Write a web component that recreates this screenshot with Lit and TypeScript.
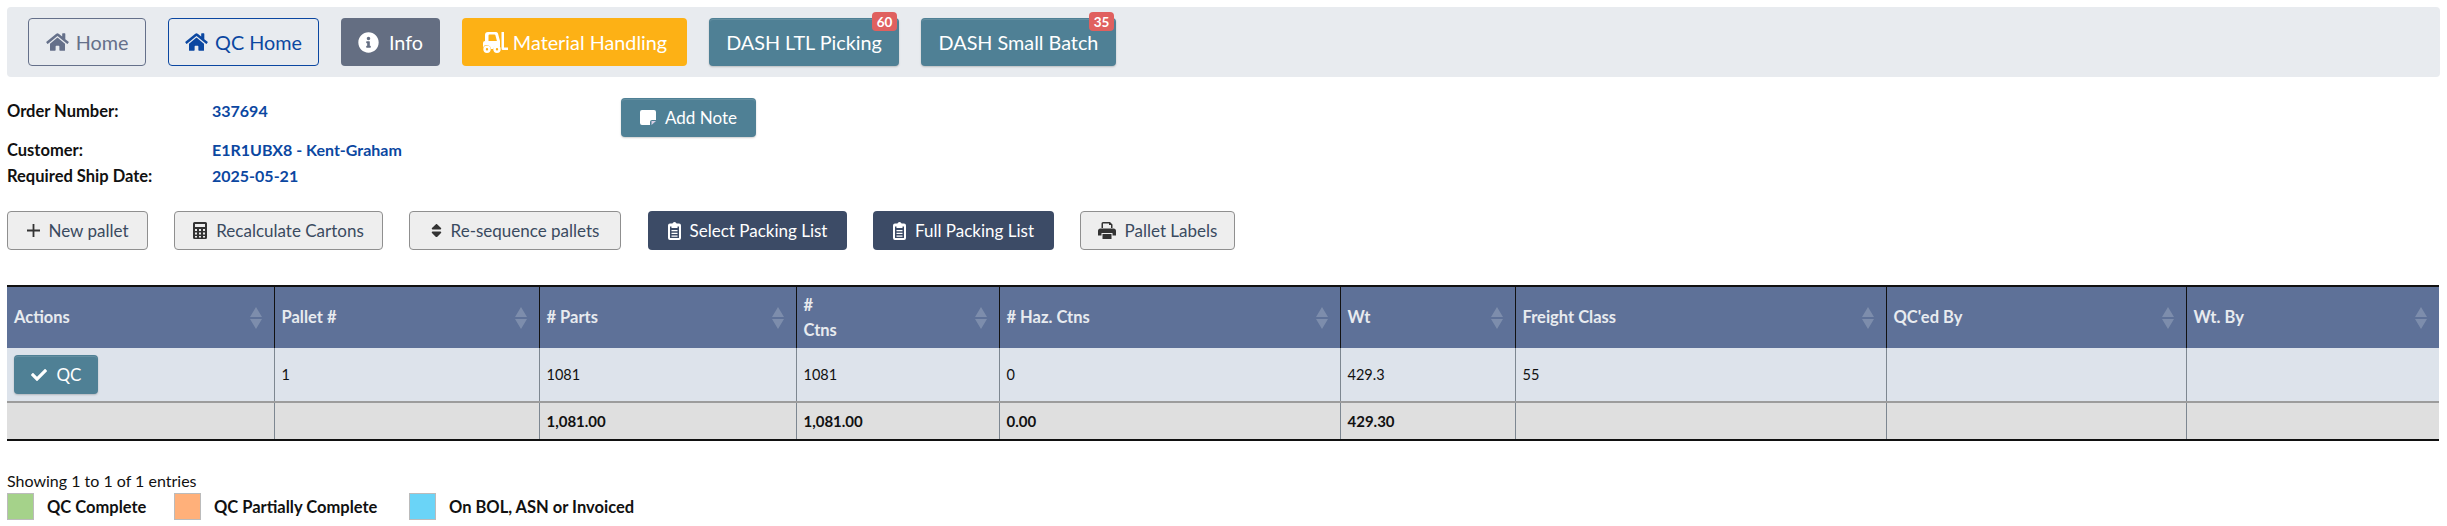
import { LitElement, html, css, svg } from 'lit'
import { customElement } from 'lit/decorators.js'

const icons: Record<string, { w: number, h: number, vb: string, body: any }> = {
  home: {
    w: 23, h: 20, vb: '0 0 576 512',
    body: svg`<path d="M280.37 148.26L96 300.11V464a16 16 0 0 0 16 16l112.06-.29a16 16 0 0 0 15.92-16V368a16 16 0 0 1 16-16h64a16 16 0 0 1 16 16v95.64a16 16 0 0 0 16 16.05L464 480a16 16 0 0 0 16-16V300L295.67 148.26a12.19 12.19 0 0 0-15.3 0zM571.6 251.47L488 182.56V44.05a12 12 0 0 0-12-12h-56a12 12 0 0 0-12 12v72.61L318.47 43a48 48 0 0 0-61 0L4.34 251.47a12 12 0 0 0-1.6 16.9l25.5 31A12 12 0 0 0 45.15 301l235.22-193.74a12.19 12.19 0 0 1 15.3 0L530.9 301a12 12 0 0 0 16.9-1.6l25.5-31a12 12 0 0 0-1.7-16.93z"/>`,
  },
  info: {
    w: 21, h: 21, vb: '0 0 512 512',
    body: svg`<path d="M256 8C119.043 8 8 119.083 8 256c0 136.997 111.043 248 248 248s248-111.003 248-248C504 119.083 392.957 8 256 8zm0 110c23.196 0 42 18.804 42 42s-18.804 42-42 42-42-18.804-42-42 18.804-42 42-42zm56 254c0 6.627-5.373 12-12 12h-88c-6.627 0-12-5.373-12-12v-24c0-6.627 5.373-12 12-12h12v-64h-12c-6.627 0-12-5.373-12-12v-24c0-6.627 5.373-12 12-12h64c6.627 0 12 5.373 12 12v100h12c6.627 0 12 5.373 12 12v24z"/>`,
  },
  forklift: {
    w: 26, h: 21, vb: '0 0 26 21',
    body: svg`<path fill-rule="evenodd" d="M6 0h8a2 2 0 0 1 2 1.500l2 7.500v6.200a4 4 0 0 0-6.800 1.800H9A4.200 4.200 0 0 0 1 15.500V11a2 2 0 0 1 2-2V3a3 3 0 0 1 3-3zm1.500 2.500a1 1 0 0 0-1 1V9h8.400L13.400 3.300a1 1 0 0 0-1-.8z"/><path fill-rule="evenodd" d="M5 13.500a3.700 3.700 0 1 1 0 7.400 3.700 3.700 0 0 1 0-7.400zm0 2.500a1.200 1.200 0 1 0 0 2.400 1.200 1.200 0 0 0 0-2.400zM15 13.500a3.700 3.700 0 1 1 0 7.400 3.700 3.700 0 0 1 0-7.400zm0 2.500a1.200 1.200 0 1 0 0 2.400 1.200 1.200 0 0 0 0-2.400z"/><path d="M19.500 0H22v15.500h4V18h-5a1.500 1.500 0 0 1-1.500-1.500z"/>`,
  },
  note: {
    w: 16, h: 15, vb: '0 0 16 15',
    body: svg`<path d="M2 0h12a2 2 0 0 1 2 2v8h-4a2 2 0 0 0-2 2v3H2a2 2 0 0 1-2-2V2a2 2 0 0 1 2-2z"/><path fill="#d9cfe6" d="M11.500 11H16l-4.500 4z"/>`,
  },
  plus: {
    w: 13, h: 13, vb: '0 0 13 13',
    body: svg`<path d="M5.600 0h1.800v5.600H13v1.800H7.400V13H5.600V7.400H0V5.600h5.600z"/>`,
  },
  calc: {
    w: 14, h: 17, vb: '0 0 14 17',
    body: svg`<path fill-rule="evenodd" d="M1.500 0h11A1.500 1.500 0 0 1 14 1.500v14a1.500 1.500 0 0 1-1.500 1.500h-11A1.500 1.500 0 0 1 0 15.500v-14A1.500 1.500 0 0 1 1.500 0zM2 2v3h10V2zm0 5v2h2V7zm4 0v2h2V7zm4 0v2h2V7zM2 10.500v2h2v-2zm4 0v2h2v-2zm4 0v2h2v-2zM2 14v1.500h2V14zm4 0v1.500h2V14zm4 0v1.500h2V14z"/>`,
  },
  sort: {
    w: 11, h: 17, vb: '0 0 320 512',
    body: svg`<path d="M41 288h238c21.400 0 32.100 25.900 17 41L177 448c-9.400 9.400-24.600 9.400-33.900 0L24 329c-15.100-15.100-4.400-41 17-41zm255-105L177 64c-9.400-9.400-24.600-9.400-33.900 0L24 183c-15.100 15.100-4.400 41 17 41h238c21.400 0 32.100-25.900 17-41z"/>`,
  },
  clip: {
    w: 13, h: 18, vb: '0 0 13 18',
    body: svg`<path fill-rule="evenodd" d="M6.500 0a2.200 2.200 0 0 1 2.100 1.500H11A2 2 0 0 1 13 3.500v12.500a2 2 0 0 1-2 2H2a2 2 0 0 1-2-2V3.500a2 2 0 0 1 2-2h2.400A2.200 2.200 0 0 1 6.500 0zM2 4.500V16h9V4.500H9.500V6h-6V4.500zM3.500 8h6v1.300h-6zm0 2.700h6V12h-6zm0 2.700h6v1.300h-6z"/>`,
  },
  print: {
    w: 18, h: 17, vb: '0 0 18 17',
    body: svg`<path fill-rule="evenodd" d="M5 0h7l2.500 2.500V6H13V3h-2V1.500H5V6H3.500V1.500A1.500 1.500 0 0 1 5 0zM2.500 6.500h13A2.500 2.500 0 0 1 18 9v4.500h-3.500V11h-11v2.500H0V9a2.500 2.500 0 0 1 2.500-2.500zM4.500 12h9v5h-9z"/>`,
  },
  check: {
    w: 16, h: 12, vb: '0 0 512 384',
    body: svg`<path transform="translate(0 -64)" d="M173.898 439.404l-166.400-166.400c-9.997-9.997-9.997-26.206 0-36.204l36.203-36.204c9.997-9.998 26.207-9.998 36.204 0L192 312.690 432.095 72.596c9.997-9.997 26.207-9.997 36.204 0l36.203 36.204c9.997 9.997 9.997 26.206 0 36.204l-294.400 294.401c-9.998 9.997-26.207 9.997-36.204-.001z"/>`,
  },
}

const icon = (name: string) => {
  const i = icons[name]
  return html`<svg class="icon" width="${i.w}" height="${i.h}" viewBox="${i.vb}" fill="currentColor">${i.body}</svg>`
}

const columns = [
  { label: ['Actions'], width: 267 },
  { label: ['Pallet #'], width: 265 },
  { label: ['# Parts'], width: 257 },
  { label: ['#', 'Ctns'], width: 203 },
  { label: ['# Haz. Ctns'], width: 341 },
  { label: ['Wt'], width: 175 },
  { label: ['Freight Class'], width: 371 },
  { label: ["QC'ed By"], width: 300 },
  { label: ['Wt. By'], width: 253 },
]

const totals = ['', '', '1,081.00', '1,081.00', '0.00', '429.30', '', '', '']
const legend = [
  { label: 'QC Complete', color: '#a5d28a', width: 167 },
  { label: 'QC Partially Complete', color: '#ffb07a', width: 235 },
  { label: 'On BOL, ASN or Invoiced', color: '#6ad4f7', width: 300 },
]

@customElement('app-root')
export class AppRoot extends LitElement {
  static styles = css`
    :host {
      display: block;
      padding: 7px 7px 0;
      color: #111;
      font-family: "Lato", "Noto Sans", sans-serif;
      font-size: 16px;
    }
    .icon { flex: none; }
    .btn {
      box-sizing: border-box;
      display: inline-flex;
      align-items: center;
      justify-content: center;
      gap: 9px;
      height: 39px;
      border: 1px solid transparent;
      border-radius: 4px;
      font-size: 17px;
      white-space: nowrap;
      position: relative;
    }
    .navbar {
      display: flex;
      align-items: center;
      gap: 22px;
      height: 70px;
      padding-left: 21px;
      box-sizing: border-box;
      width: 2433px;
      background: #e8ebef;
      border-radius: 4px;
    }
    .navbar .btn {
      height: 48px;
      font-size: 19.800px;
      gap: 7px;
    }
    .navbar .amber { gap: 5px; }
    .navbar .grey { gap: 10px; }
    .outline-grey { width: 118px; border-color: #65708a; color: #65708a; }
    .outline-blue { width: 151px; border-color: #0b47a1; color: #0b47a1; }
    .grey { width: 99px; background: #646e82; color: #fff; }
    .amber { width: 225px; background: #fdb115; color: #fff; }
    .teal {
      background: #4f8095;
      color: #fff;
      box-shadow: inset 0 1px 0 rgba(255, 255, 255, .12), 0 1px 2px rgba(0, 0, 0, .2);
    }
    .dash-ltl { width: 190px; }
    .dash-small { width: 195px; }
    .badge {
      position: absolute;
      top: -7px;
      right: 1px;
      width: 25px;
      height: 19px;
      display: flex;
      align-items: center;
      justify-content: center;
      background: #e0605f;
      border-radius: 4px;
      color: #fff;
      font-size: 13.500px;
      font-weight: 700;
    }
    .info {
      display: flex;
      margin-top: 21px;
      height: 113px;
    }
    .details {
      display: grid;
      grid-template-columns: 205px 409px;
      grid-template-rows: 39px 26px 26px;
      align-items: start;
      align-content: start;
      line-height: 26px;
      font-size: 16.500px;
      font-weight: 700;
    }
    .details .value { color: #0b47a1; font-size: 16px; }
    .note { width: 135px; }
    .toolbar {
      display: flex;
      gap: 26px;
    }
    .light { background: #eee; border-color: #8f8f8f; color: #3a4a5f; }
    .light .icon { color: #333; }
    .dark { background: #3c4b66; color: #fff; }
    .w-new { width: 141px; }
    .w-recalc { width: 209px; }
    .w-reseq { width: 212px; }
    .w-select { width: 199px; margin-left: 1px; }
    .w-full { width: 181px; }
    .w-labels { width: 155px; }
    table {
      margin-top: 35px;
      width: 2431px;
      table-layout: fixed;
      border-collapse: collapse;
      border-top: 2px solid #111;
      border-bottom: 2px solid #111;
      font-size: 14.500px;
    }
    th {
      position: relative;
      height: 62px;
      padding: 0 26px 0 7px;
      box-sizing: border-box;
      background: #5e7198;
      border-left: 1px solid #111;
      color: #e8ebef;
      text-align: left;
      font-size: 16.500px;
      font-weight: 700;
    }
    th:first-child, td:first-child { border-left: 0; }
    th div { line-height: 25px; }
    .sort {
      position: absolute;
      top: 20px;
      right: 12px;
      width: 12px;
      height: 22px;
    }
    td {
      padding: 0 7px;
      box-sizing: border-box;
      border-left: 1px solid #7d8791;
    }
    .row td { height: 54px; background: #dde3eb; }
    .total td {
      height: 38px;
      background: #dfdfdf;
      border-top: 2px solid #9c9c9c;
      font-size: 15px;
      font-weight: 700;
    }
    .qc { width: 84px; height: 39px; font-size: 17px; gap: 10px; vertical-align: middle; }
    .summary { margin-top: 30px; font-size: 16px; line-height: 20px; }
    .legend {
      display: flex;
      margin-top: 2px;
      font-size: 16.500px;
      font-weight: 700;
    }
    .legend-item {
      display: flex;
      align-items: center;
      gap: 13px;
    }
    .swatch {
      width: 25px;
      height: 25px;
      border: 1px solid #bbb;
    }
  `

  render () {
    return html`
      <nav class="navbar">
        <span class="btn outline-grey">${icon('home')}Home</span>
        <span class="btn outline-blue">${icon('home')}QC Home</span>
        <span class="btn grey">${icon('info')}Info</span>
        <span class="btn amber">${icon('forklift')}Material Handling</span>
        <span class="btn teal dash-ltl">DASH LTL Picking<span class="badge">60</span></span>
        <span class="btn teal dash-small">DASH Small Batch<span class="badge">35</span></span>
      </nav>
      <section class="info">
        <div class="details">
          <span>Order Number:</span><span class="value">337694</span>
          <span>Customer:</span><span class="value">E1R1UBX8 - Kent-Graham</span>
          <span>Required Ship Date:</span><span class="value">2025-05-21</span>
        </div>
        <span class="btn teal note">${icon('note')}Add Note</span>
      </section>
      <div class="toolbar">
        <span class="btn light w-new">${icon('plus')}New pallet</span>
        <span class="btn light w-recalc">${icon('calc')}Recalculate Cartons</span>
        <span class="btn light w-reseq">${icon('sort')}Re-sequence pallets</span>
        <span class="btn dark w-select">${icon('clip')}Select Packing List</span>
        <span class="btn dark w-full">${icon('clip')}Full Packing List</span>
        <span class="btn light w-labels">${icon('print')}Pallet Labels</span>
      </div>
      <table>
        <colgroup>
          ${columns.map(c => html`<col style="width:${c.width}px">`)}
        </colgroup>
        <thead>
          <tr>
            ${columns.map(c => html`
              <th>
                ${c.label.map(line => html`<div>${line}</div>`)}
                <svg class="sort" viewBox="0 0 12 22" fill="#7d8dac"><path d="M6 0l6 10H0zM6 22 0 12h12z"/></svg>
              </th>
            `)}
          </tr>
        </thead>
        <tbody>
          <tr class="row">
            <td><span class="btn teal qc">${icon('check')}QC</span></td>
            <td>1</td><td>1081</td><td>1081</td><td>0</td><td>429.3</td><td>55</td><td></td><td></td>
          </tr>
          <tr class="total">
            ${totals.map(t => html`<td>${t}</td>`)}
          </tr>
        </tbody>
      </table>
      <div class="summary">Showing 1 to 1 of 1 entries</div>
      <div class="legend">
        ${legend.map(l => html`
          <div class="legend-item" style="width:${l.width}px">
            <span class="swatch" style="background:${l.color}"></span>${l.label}
          </div>
        `)}
      </div>
    `
  }
}
